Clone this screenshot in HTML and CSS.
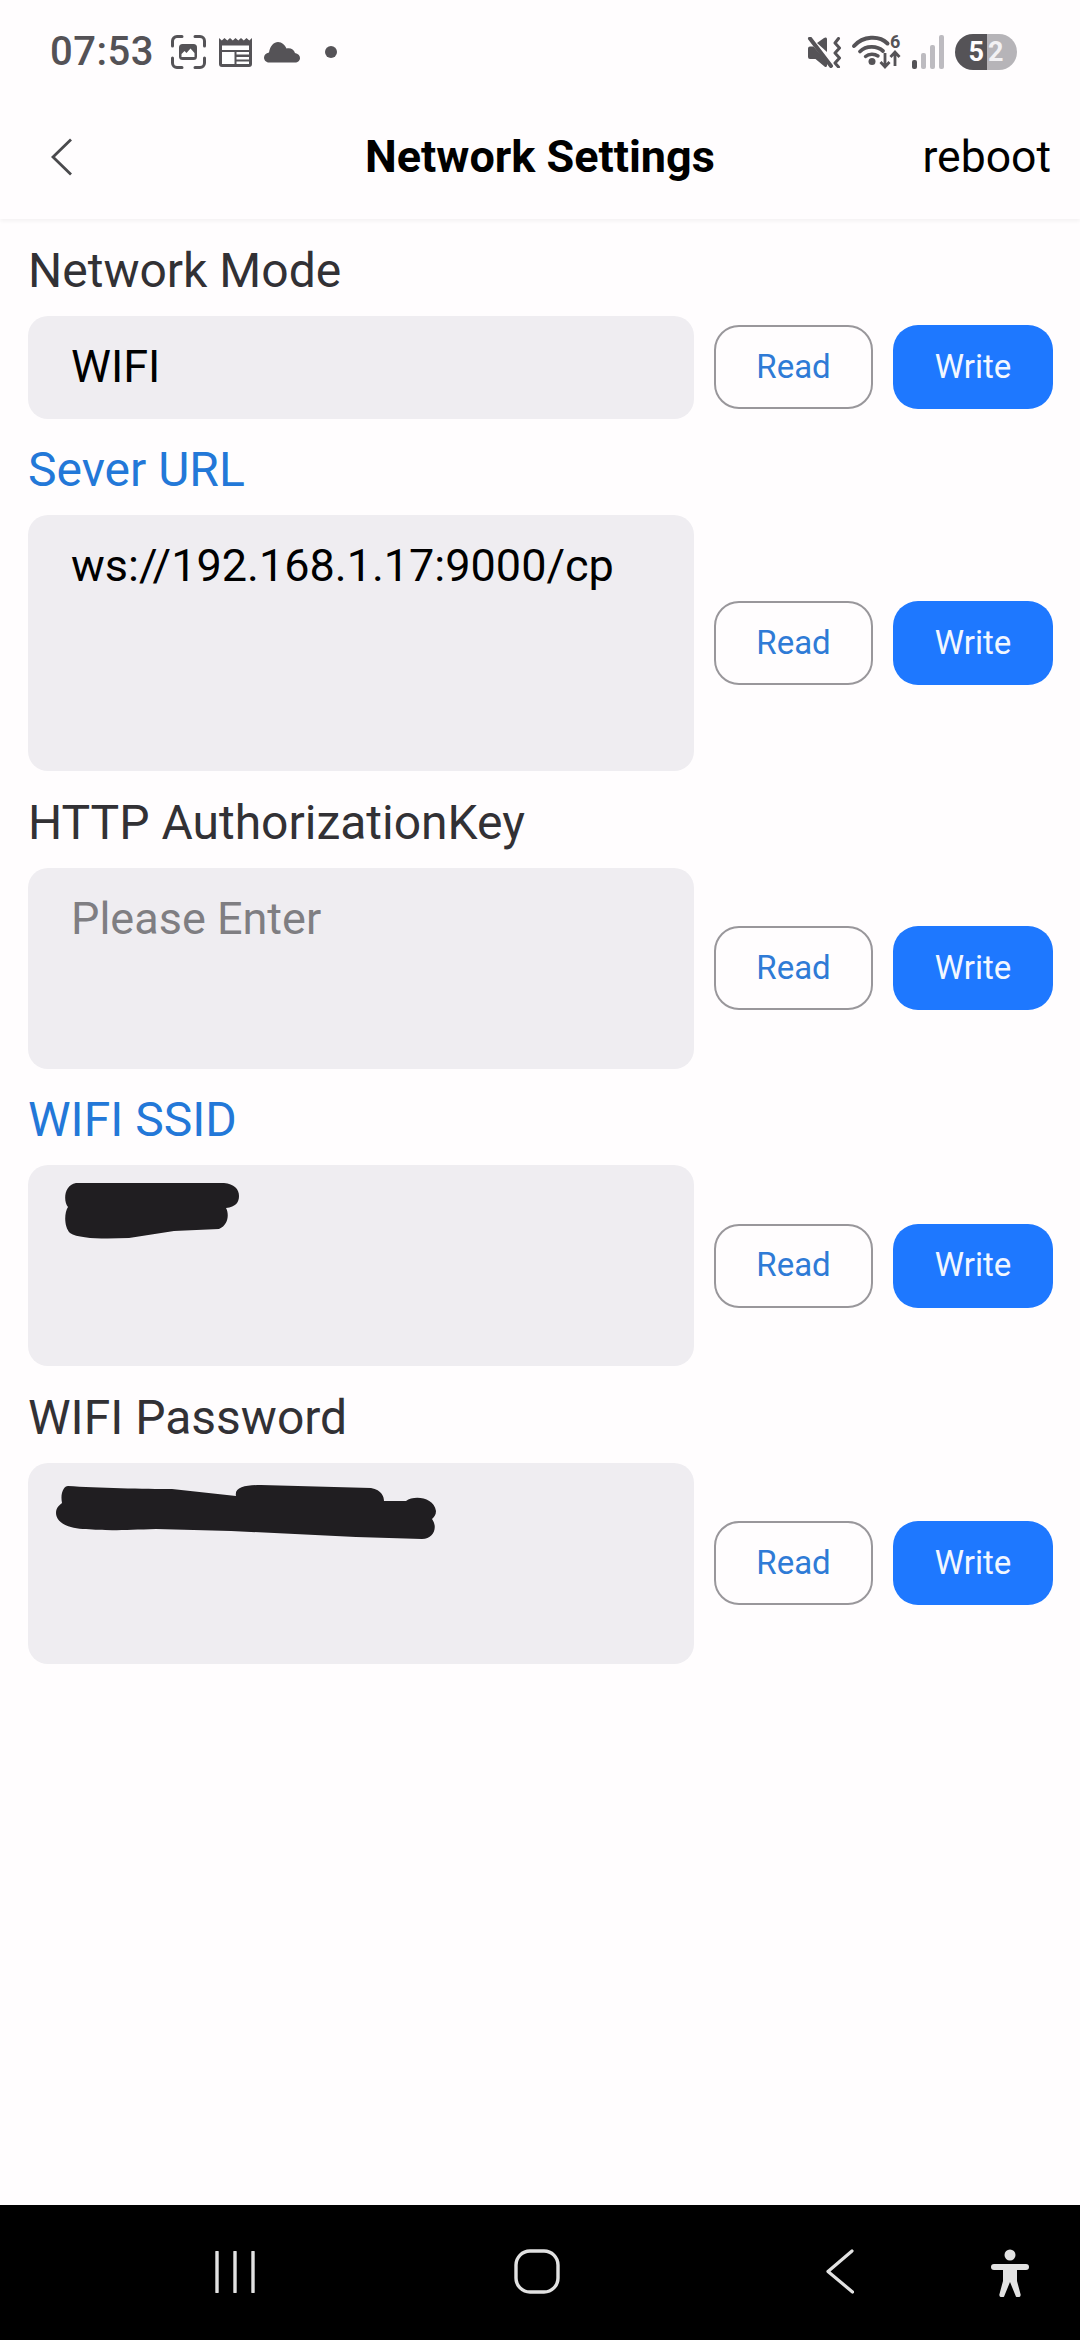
FILE: index.html
```html
<!DOCTYPE html>
<html lang="en">
<head>
<meta charset="utf-8">
<title>Network Settings</title>
<link rel="stylesheet" href="styles.css">
</head>
<body>
<div class="screen">
  <header class="top">
    <div class="status">
      <div class="status-left">
        <span class="time">07:53</span>
        <svg class="ic-shot" viewBox="0 0 35 34"><path d="M1.500 11V6A4.500 4.500 0 0 1 6 1.500h5M24 1.500h5A4.500 4.500 0 0 1 33.500 6v5M33.500 23v5a4.500 4.500 0 0 1-4.500 4.500h-5M11 32.500H6A4.500 4.500 0 0 1 1.500 28v-5" fill="none" stroke="#555357" stroke-width="3" stroke-linecap="round"/><rect x="8" y="9" width="18" height="16" rx="3.500" fill="#555357"/><path d="M10.500 22v-3l3-3 2 2 4-4.500 4 4.500v4z" fill="#fff"/></svg>
        <svg class="ic-news" viewBox="0 0 33 29"><path d="M0 29V0l2.800 2.500L5.500 0l2.800 2.500L11 0l2.800 2.500L16.500 0l2.800 2.500L22 0l2.800 2.500L27.500 0l2.800 2.500L33 0v26a3 3 0 0 1-3 3H3a3 3 0 0 1-3-3z" fill="#555357"/><path d="M3 7.500h27V12H3zM3 14h12.500v12H3zM17.500 14H30v2.500H17.500zM17.500 19H30v2.500H17.500zM17.500 23.500H30V26H17.500z" fill="#fff"/></svg>
        <svg class="ic-cloud" viewBox="0 0 36 21"><path d="M5 20.500C2 20.500 0 18 0 15.500S2 11 5 10.500C6 4 10 0 14 0c4 0 7 3 8.500 6.500C26 5.500 30 7 31 11c3 .5 5 2.500 5 5s-2 4.500-5 4.500z" fill="#555357"/></svg>
        <span class="dot"></span>
      </div>
      <div class="status-right">
        <svg class="ic-mute" viewBox="0 0 35 31"><path d="M1 11.500a2 2 0 0 1 2-2h3.500L20 25v3.500c0 1.500-1.500 2-2.500 1L8.500 22H3a2 2 0 0 1-2-2z" fill="#555357"/><path d="M10 6l7-5c1.500-1 3-.5 3 1v13z" fill="#555357"/><path d="M3 1.500L24 29" stroke="#555357" stroke-width="4" stroke-linecap="round"/><path d="M31.500 1.500L28 6l4.500 5L28 16l4.500 5L28 26l3.500 4" fill="none" stroke="#555357" stroke-width="3" stroke-linejoin="round" stroke-linecap="round"/></svg>
        <svg class="ic-wifi" viewBox="0 0 50 34"><path d="M2 11C11 1 27 0 35.500 8.500" fill="none" stroke="#555357" stroke-width="4" stroke-linecap="round"/><path d="M8 16.500C14 10.500 25 10.500 31 16" fill="none" stroke="#555357" stroke-width="3.800" stroke-linecap="round"/><path d="M13.500 21.500c3.500-3 9-3 12.500-.5" fill="none" stroke="#555357" stroke-width="3.400" stroke-linecap="round"/><circle cx="20" cy="26.500" r="3.500" fill="#555357"/><path d="M33 18v14M28.500 27l4.500 5 4.500-5M43 31V17M38.500 22l4.500-5 4.500 5" fill="none" stroke="#555357" stroke-width="2.800"/><text class="wifi-six" x="38" y="13">6</text></svg>
        <svg class="ic-signal" viewBox="0 0 32 34"><rect x="0" y="25" width="5" height="9" rx="2" fill="#555357"/><rect x="9" y="18" width="5" height="16" rx="2" fill="#bdbbc0"/><rect x="18" y="10" width="5" height="24" rx="2" fill="#bdbbc0"/><rect x="27" y="0" width="5" height="34" rx="2" fill="#bdbbc0"/></svg>
        <div class="battery"><span class="batt-a">5</span><span class="batt-b">2</span></div>
      </div>
    </div>
    <div class="toolbar">
      <div class="tb-left">
        <svg class="ic-back" viewBox="0 0 22 38"><path d="M20 1.500L2 19l18 17.500" fill="none" stroke="#4a4a4d" stroke-width="2.800"/></svg>
      </div>
      <h1 class="title">Network Settings</h1>
      <div class="tb-right">reboot</div>
    </div>
  </header>

  <main class="form">
    <section class="field">
      <div class="label">Network Mode</div>
      <div class="row">
        <div class="input h-single">WIFI</div>
        <button class="btn btn-read">Read</button>
        <button class="btn btn-write">Write</button>
      </div>
    </section>
    <section class="field">
      <div class="label label-blue">Sever URL</div>
      <div class="row">
        <div class="input h-url">ws://192.168.1.17:9000/cp</div>
        <button class="btn btn-read">Read</button>
        <button class="btn btn-write">Write</button>
      </div>
    </section>
    <section class="field">
      <div class="label">HTTP AuthorizationKey</div>
      <div class="row">
        <div class="input h-area placeholder">Please Enter</div>
        <button class="btn btn-read">Read</button>
        <button class="btn btn-write">Write</button>
      </div>
    </section>
    <section class="field">
      <div class="label label-blue">WIFI SSID</div>
      <div class="row">
        <div class="input h-area input-scribble">
          <svg class="scribble-a" viewBox="0 0 175 57"><path d="M12 0H160c10 1 15 6 15 13 0 6-3 11-13 12 3 5 3 17-7 21l-45 2-45 7c-25 1-50 1-59-5-6-6-6-20-2-26C-1 18 0 2 12 0z" fill="#201e21"/></svg>
        </div>
        <button class="btn btn-read">Read</button>
        <button class="btn btn-write">Write</button>
      </div>
    </section>
    <section class="field">
      <div class="label">WIFI Password</div>
      <div class="row">
        <div class="input h-area input-scribble">
          <svg class="scribble-b" viewBox="0 0 380 54"><path d="M12 1c28 2 78 3 104 3l64 7c-2-9 10-11 25-11l110 3c11 2 13 9 13 13h22c8-6 28-4 30 10 0 4-2 6-4 8 6 8 2 20-10 20l-66-2-125-6-75-2c-30 1-50 2-70 0C14 44 0 38 0 28c0-6 4-8 6-10C4 8 8 1 12 1z" fill="#201e21"/></svg>
        </div>
        <button class="btn btn-read">Read</button>
        <button class="btn btn-write">Write</button>
      </div>
    </section>
  </main>

  <nav class="navbar">
    <svg class="nav-recent" viewBox="0 0 40 42"><path d="M2 1v40M20 1v40M38 1v40" stroke="#e2e2e2" stroke-width="3.400" stroke-linecap="round"/></svg>
    <svg class="nav-home" viewBox="0 0 46 45"><rect x="2" y="2" width="42" height="41" rx="14" fill="none" stroke="#e2e2e2" stroke-width="3.400"/></svg>
    <svg class="nav-back" viewBox="0 0 28 45"><path d="M26 2L2 22.500 26.500 43" fill="none" stroke="#e2e2e2" stroke-width="3.200" stroke-linecap="round" stroke-linejoin="round"/></svg>
    <svg class="nav-a11y" viewBox="0 0 38 48"><circle cx="19" cy="6" r="5.500" fill="#e2e2e2"/><rect x="0" y="15" width="38" height="6" rx="3" fill="#e2e2e2"/><path d="M12 20h14v12l3.500 13a2.500 2.500 0 0 1-5 1.500L19 33l-5.500 13.500a2.500 2.500 0 0 1-5-1.500L12 32z" fill="#e2e2e2"/></svg>
  </nav>
</div>
</body>
</html>
```
FILE: styles.css
```css
* { box-sizing: border-box; }
html, body { margin: 0; padding: 0; }
body {
  background: #fffdfe;
  font-family: Roboto, "Liberation Sans", sans-serif;
}
.screen {
  width: 1080px;
  height: 2340px;
  display: flex;
  flex-direction: column;
  overflow: hidden;
}

/* header */
.top {
  height: 219px;
  flex: none;
  background: #fffdfe;
  box-shadow: 0 2px 4px rgba(0, 0, 0, 0.05);
  position: relative;
}
.status {
  height: 104px;
  display: flex;
  align-items: center;
  justify-content: space-between;
  padding: 0 63px 0 50px;
}
.status-left, .status-right { display: flex; align-items: center; }
.time {
  font-size: 40px;
  font-weight: 500;
  color: #545256;
  line-height: 44px;
  letter-spacing: 0.5px;
  width: 121px;
}
.ic-shot { width: 35px; height: 34px; }
.ic-news { width: 33px; height: 29px; margin-left: 13px; margin-top: 1px; }
.ic-cloud { width: 36px; height: 21px; margin-left: 12px; }
.dot { width: 12px; height: 12px; border-radius: 50%; background: #555357; margin-left: 25px; }
.ic-mute { width: 35px; height: 31px; }
.ic-wifi { width: 50px; height: 34px; margin-left: 10px; overflow: visible; }
.wifi-six { font-family: Roboto, sans-serif; font-size: 18px; font-weight: 700; fill: #555357; }
.ic-signal { width: 32px; height: 34px; margin-left: 10px; }
.battery {
  width: 62px;
  height: 36px;
  margin-left: 11px;
  border-radius: 18px;
  overflow: hidden;
  display: flex;
  font-size: 27px;
  font-weight: 700;
  line-height: 36px;
  color: #fffdfe;
}
.batt-a { width: 32px; background: #555357; text-align: right; padding-right: 3px; }
.batt-b { width: 30px; background: #b6b4b8; text-align: left; padding-left: 1px; color: #f2f1f3; }

.toolbar {
  height: 106px;
  display: grid;
  grid-template-columns: 1fr auto 1fr;
  align-items: center;
  padding: 0 29px;
}
.ic-back { display: block; width: 22px; height: 38px; margin-left: 22px; }
.title {
  margin: 0;
  font-size: 45px;
  font-weight: 700;
  color: #000;
  line-height: 60px;
}
.tb-right {
  text-align: right;
  font-size: 44.500px;
  color: #000;
  line-height: 60px;
}

/* form */
.form { flex: 1; }
.label {
  height: 96.500px;
  padding-top: 20.500px;
  font-size: 48px;
  line-height: 61px;
  color: #323135;
}
.field { padding: 0 27px 0 28px; }
.label-blue { color: #2378d8; }
.row {
  display: flex;
  align-items: center;
  gap: 20px;
}
.input {
  width: 666px;
  flex: none;
  background: #efedf1;
  border-radius: 20px;
  padding: 20px 43px;
  font-size: 45px;
  line-height: 61px;
  color: #000;
  overflow: hidden;
}
.h-single { height: 103px; }
.h-url { height: 256px; padding-top: 20px; }
.h-area { height: 201px; }
.placeholder { color: #7f7e82; }
.input-scribble { position: relative; }
.scribble-a { position: absolute; left: 36px; top: 18px; width: 175px; height: 57px; }
.scribble-b { position: absolute; left: 28px; top: 22px; width: 380px; height: 54px; }

.btn {
  height: 84px;
  flex: none;
  border-radius: 25px;
  font-family: Roboto, sans-serif;
  font-size: 33px;
  padding: 0 0 2px;
}
.btn-read {
  width: 159px;
  background: #fffdfe;
  border: 2px solid #99979b;
  color: #2f7bd6;
}
.btn-write {
  width: 160px;
  background: #1e78ff;
  border: 0;
  color: #f2f7ff;
}

/* bottom nav */
.navbar {
  height: 135px;
  flex: none;
  background: #000;
  display: flex;
  align-items: flex-start;
  padding: 44px 0 0 215px;
}
.nav-recent { width: 40px; height: 42px; margin-top: 2px; }
.nav-home { width: 46px; height: 45px; margin-left: 259px; }
.nav-back { width: 28px; height: 45px; margin-left: 266px; }
.nav-a11y { width: 38px; height: 48px; margin-left: 137px; }
```
